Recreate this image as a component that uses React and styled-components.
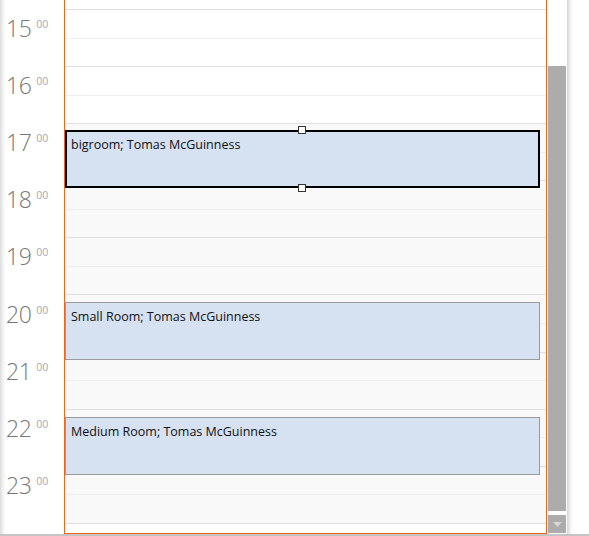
import React from 'react';
import styled, { createGlobalStyle } from 'styled-components';

const GlobalStyle = createGlobalStyle`
  html, body {
    margin: 0;
    padding: 0;
    background: #fff;
    overflow: hidden;
  }
`;

const SLOT = 28.556;
const HOUR = SLOT * 2;
const ACCENT = '#f0651c';

const Frame = styled.div`
  width: 589px;
  height: 536px;
  display: flex;
  flex-direction: column;
  font-family: 'Open Sans', 'Noto Sans', sans-serif;
`;

const Main = styled.div`
  display: flex;
  height: 534px;
`;

const TimeColumn = styled.div`
  width: 64px;
  flex: none;
  display: flex;
  flex-direction: column;
  background: linear-gradient(to right, #dcdcdc 0px, #ececec 2px, #f8f8f8 4px, #fff 6px);
`;

const TimeSpacer = styled.div`
  height: 10px;
  flex: none;
`;

const HourCell = styled.div`
  height: ${HOUR}px;
  flex: none;
  box-sizing: border-box;
  padding: 3px 0 0 6px;
  display: flex;
  align-items: flex-start;
  color: #777;
`;

const HourNum = styled.span`
  font-family: 'Open Sans', 'Noto Sans', sans-serif;
  font-weight: 300;
  font-size: 23px;
  line-height: 30px;
  letter-spacing: -0.5px;
`;

const Minutes = styled.span`
  font-size: 10.5px;
  line-height: 12px;
  margin: 5px 0 0 5px;
  color: #a6a8b0;
`;

const DayColumn = styled.div`
  position: relative;
  width: 483px;
  flex: none;
  box-sizing: border-box;
  border-left: 1px solid ${ACCENT};
  border-right: 1px solid ${ACCENT};
  border-bottom: 1px solid ${ACCENT};
  display: flex;
  flex-direction: column;
  overflow: hidden;
`;

const Slot = styled.div`
  flex: none;
  box-sizing: border-box;
  height: ${(p) => p.$h}px;
  background: ${(p) => (p.$off ? '#f9f9f9' : '#fff')};
  border-bottom: 1px solid ${(p) => (p.$major ? '#e0e0e0' : '#eeeeee')};
`;

const SlotFill = styled.div`
  flex: 1;
  background: #fff;
`;

const Event = styled.div`
  position: absolute;
  left: 0;
  width: 475px;
  height: 58px;
  box-sizing: border-box;
  background: #d6e1f2;
  border: ${(p) => (p.$selected ? '2px solid #000' : '1px solid #9a9a9a')};
  padding: ${(p) => (p.$selected ? '4px 4px' : '5px 5px')};
  font-size: 12.5px;
  line-height: 17px;
  color: #111;
`;

const Handle = styled.div`
  position: absolute;
  left: 233px;
  width: 8px;
  height: 8px;
  box-sizing: border-box;
  background: #fff;
  border: 1px solid #333;
`;

const Gap = styled.div`
  width: 1px;
  flex: none;
`;

const Scrollbar = styled.div`
  width: 18px;
  flex: none;
  display: flex;
  flex-direction: column;
  background: #fff;
  padding-bottom: 1px;
  box-sizing: border-box;
`;

const Track = styled.div`
  flex: 1;
  display: flex;
  flex-direction: column;
  padding-top: 66px;
  padding-bottom: 4px;
`;

const Thumb = styled.div`
  flex: 1;
  background: #acacac;
`;

const ArrowButton = styled.div`
  height: 18px;
  background: #acacac;
  display: flex;
  align-items: center;
  justify-content: center;
`;

const RightGutter = styled.div`
  flex: 1;
  background: linear-gradient(to right, #fff 0px, #fff 1px, #d4d4d4 1px, #e6e6e6 3px, #f6f6f6 5px, #fff 7px);
`;

const BottomStrip = styled.div`
  height: 2px;
  background: #c4c4c4;
`;

const hours = [15, 16, 17, 18, 19, 20, 21, 22, 23];

const events = [
  { hour: 17, title: 'bigroom; Tomas McGuinness', selected: true },
  { hour: 20, title: 'Small Room; Tomas McGuinness' },
  { hour: 22, title: 'Medium Room; Tomas McGuinness' },
];

const eventTop = (h) => Math.round(130 + (h - 17) * 57.33);

export default function App() {
  const slots = [];
  for (let k = 1; k <= 18; k++) {
    slots.push({ major: k % 2 === 0, off: k >= 5 });
  }

  return (
    <Frame>
      <GlobalStyle />
      <Main>
        <TimeColumn>
          <TimeSpacer />
          {hours.map((h) => (
            <HourCell key={h}>
              <HourNum>{h}</HourNum>
              <Minutes>00</Minutes>
            </HourCell>
          ))}
        </TimeColumn>
        <DayColumn>
          <Slot $h={10} $major />
          {slots.map((s, i) => (
            <Slot key={i} $h={SLOT} $major={s.major} $off={s.off} />
          ))}
          <SlotFill />
          {events.map((ev) => (
            <Event key={ev.hour} $selected={ev.selected} style={{ top: eventTop(ev.hour) }}>
              {ev.title}
            </Event>
          ))}
          <Handle style={{ top: eventTop(17) - 4 }} />
          <Handle style={{ top: eventTop(17) + 54 }} />
        </DayColumn>
        <Gap />
        <Scrollbar>
          <Track>
            <Thumb />
          </Track>
          <ArrowButton>
            <svg width="9" height="5" viewBox="0 0 9 5">
              <path d="M0 0 L9 0 L4.5 5 Z" fill="#d6d6d6" />
            </svg>
          </ArrowButton>
        </Scrollbar>
        <RightGutter />
      </Main>
      <BottomStrip />
    </Frame>
  );
}
